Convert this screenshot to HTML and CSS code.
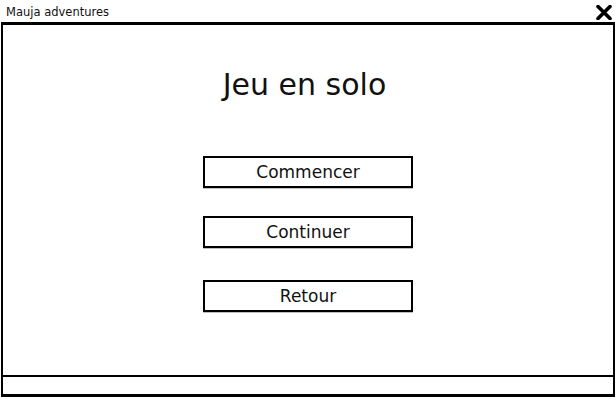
FILE: index.html
```html
<!DOCTYPE html>
<html lang="fr">
<head>
  <meta charset="UTF-8">
  <title>Mauja adventures</title>
  <link rel="stylesheet" href="styles.css">
</head>
<body>
  <div class="window">
    <div class="titlebar">
      <span class="title">Mauja adventures</span>
      <svg class="close" width="16" height="15" viewBox="0 0 16 15">
        <path d="M2 1.5 L14 13.5 M14 1.5 L2 13.5" stroke="#000" stroke-width="3.6" stroke-linecap="round"/>
      </svg>
    </div>

    <div class="content">
      <h1>Jeu en solo</h1>
      <div class="menu">
        <button>Commencer</button>
        <button>Continuer</button>
        <button>Retour</button>
      </div>
    </div>

    <div class="statusbar"></div>
  </div>
</body>
</html>
```

FILE: styles.css
```css
:root {
  --line-color: #000;
  --background-color: #fff;
  --text-color: #111;
}

* {
  box-sizing: border-box;
  margin: 0;
  padding: 0;
}

body {
  font-family: "DejaVu Sans", sans-serif;
  background-color: var(--background-color);
  color: var(--text-color);
}

.window {
  width: 614px;
  height: 397px;
  margin-left: 1px;
  display: flex;
  flex-direction: column;
  border-bottom: 3px solid var(--line-color);
}

.titlebar {
  height: 25px;
  display: flex;
  align-items: center;
  justify-content: space-between;
  padding: 1px 4px 0 5px;
  border-bottom: 3px solid var(--line-color);
}

.title {
  font-size: 11.5px;
}

.close {
  margin-top: 2px;
  margin-right: -1px;
}

.content {
  flex: 1;
  border-left: 2px solid var(--line-color);
  border-right: 2px solid var(--line-color);
  border-bottom: 2px solid var(--line-color);
  display: flex;
  flex-direction: column;
  align-items: center;
  padding-top: 40px;
}

h1 {
  font-size: 30px;
  font-weight: normal;
  line-height: 40px;
  margin-right: 7px;
}

.menu {
  margin-top: 51px;
  display: flex;
  flex-direction: column;
  gap: 28px;
}

button {
  width: 210px;
  height: 32px;
  font-family: "DejaVu Sans", sans-serif;
  font-size: 17px;
  color: var(--text-color);
  background-color: var(--background-color);
  border: 2px solid var(--line-color);
  box-shadow: 0 1px 0 rgba(0, 0, 0, 0.25);
}

.menu button:last-child {
  margin-top: 4px;
}

.statusbar {
  height: 17px;
  border-left: 2px solid var(--line-color);
  border-right: 2px solid var(--line-color);
}
```
